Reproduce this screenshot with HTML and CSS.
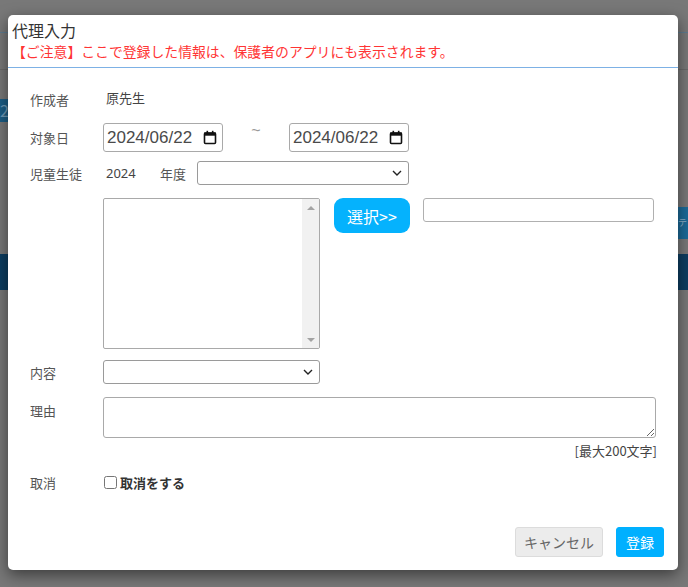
FILE: index.html
```html
<!DOCTYPE html>
<html lang="ja">
<head>
<meta charset="utf-8">
<title>代理入力</title>
<link rel="stylesheet" href="styles.css">
</head>
<body>
<div class="page">
  <div class="bar1"></div>
  <div class="bar2"></div>
  <div class="bg-row-a"><span class="bg-tab-left">2</span></div>
  <div class="bg-row-b"><span class="bg-tab-right">テ</span></div>
  <div class="bg-band"></div>
</div>

<div class="modal">
  <div class="modal-header">
    <div class="modal-title">代理入力</div>
    <div class="modal-notice">【ご注意】ここで登録した情報は、保護者のアプリにも表示されます。</div>
  </div>

  <div class="modal-body">
    <div class="row row-author">
      <div class="label">作成者</div>
      <div class="value author">原先生</div>
    </div>

    <div class="row row-date">
      <div class="label">対象日</div>
      <div class="date-input">
        <span class="date-text">2024/06/22</span>
        <svg class="cal" width="14" height="15" viewBox="0 0 14 15"><rect x="1.5" y="3" width="11" height="10.5" rx="1" fill="none" stroke="#111" stroke-width="1.6"/><rect x="1" y="2.5" width="12" height="3.2" fill="#111"/><rect x="3.5" y="0.8" width="1.6" height="2.5" fill="#111"/><rect x="8.9" y="0.8" width="1.6" height="2.5" fill="#111"/></svg>
      </div>
      <span class="tilde">~</span>
      <div class="date-input">
        <span class="date-text">2024/06/22</span>
        <svg class="cal" width="14" height="15" viewBox="0 0 14 15"><rect x="1.5" y="3" width="11" height="10.5" rx="1" fill="none" stroke="#111" stroke-width="1.6"/><rect x="1" y="2.5" width="12" height="3.2" fill="#111"/><rect x="3.5" y="0.8" width="1.6" height="2.5" fill="#111"/><rect x="8.9" y="0.8" width="1.6" height="2.5" fill="#111"/></svg>
      </div>
    </div>

    <div class="row row-student">
      <div class="label">児童生徒</div>
      <span class="year">2024</span>
      <span class="year-label">年度</span>
      <div class="select select-year">
        <svg class="chev" width="10" height="6" viewBox="0 0 10 6"><polyline points="1,1 5,5 9,1" fill="none" stroke="#222" stroke-width="1.4"/></svg>
      </div>
    </div>

    <div class="row row-list">
      <div class="label"></div>
      <div class="listbox">
        <div class="list-area"></div>
        <div class="scroll-track">
          <span class="arrow-up"></span>
          <span class="arrow-down"></span>
        </div>
      </div>
      <button class="btn-select">選択&gt;&gt;</button>
      <input class="text-input" type="text">
    </div>

    <div class="row row-content">
      <div class="label">内容</div>
      <div class="select select-content">
        <svg class="chev" width="10" height="6" viewBox="0 0 10 6"><polyline points="1,1 5,5 9,1" fill="none" stroke="#222" stroke-width="1.4"/></svg>
      </div>
    </div>

    <div class="row row-reason">
      <div class="label label-top">理由</div>
      <div class="reason-col">
        <textarea class="reason"></textarea>
        <div class="limit">[最大200文字]</div>
      </div>
    </div>

    <div class="row row-cancel">
      <div class="label">取消</div>
      <label class="check"><input type="checkbox"><span>取消をする</span></label>
    </div>
  </div>

  <div class="modal-footer">
    <button class="btn btn-cancel">キャンセル</button>
    <button class="btn btn-submit">登録</button>
  </div>
</div>
</body>
</html>
```

FILE: styles.css
```css
* { box-sizing: border-box; }

html, body {
  margin: 0;
  padding: 0;
  width: 688px;
  height: 587px;
  overflow: hidden;
  font-family: "Noto Sans CJK JP", "Noto Sans", sans-serif;
}

body { position: relative; background: #787878; }

.page {
  display: flex;
  flex-direction: column;
  height: 587px;
  background: #787878;
}
.bar1 { height: 33px; border-bottom: 1px solid #5d7a8e; }
.bar2 { height: 37px; border-bottom: 1px solid #6a6a6a; }
.bg-row-a { margin-top: 29px; height: 23px; }
.bg-tab-left {
  display: block;
  width: 8px;
  height: 23px;
  background: #1c5e86;
  color: #6f9bb8;
  font-size: 16px;
  line-height: 23px;
  overflow: hidden;
}
.bg-row-b {
  margin-top: 85px;
  height: 32px;
  display: flex;
  justify-content: flex-end;
}
.bg-tab-right {
  width: 10px;
  height: 32px;
  background: #1b6a98;
  color: #8fb3cc;
  font-size: 9px;
  line-height: 32px;
  overflow: hidden;
  text-align: left;
}
.bg-band { margin-top: 15px; height: 36px; background: #0d3d61; }

/* modal */
.modal {
  position: absolute;
  left: 8px;
  top: 15px;
  width: 670px;
  height: 555px;
  background: #fff;
  border-radius: 5px;
  box-shadow: 0 5px 15px rgba(0,0,0,0.5);
  display: flex;
  flex-direction: column;
}

.modal-header {
  padding: 4px 4px 6px 4px;
  border-bottom: 1px solid #7db1e5;
}
.modal-title {
  font-size: 16px;
  line-height: 22px;
  color: #333;
}
.modal-notice {
  font-size: 13.85px;
  line-height: 20px;
  color: #ff3434;
}

.modal-body {
  padding: 20px 21px 0 22px;
  flex: 1;
}

.row { display: flex; align-items: center; }

.label {
  width: 73px;
  flex: none;
  font-size: 13px;
  color: #555;
}

.row-author { height: 22px; margin-bottom: 13px; }
.author { font-size: 13px; color: #444; margin-left: 3px; margin-top: -4px; }

.row-date { height: 29px; margin-bottom: 9px; }
.date-input {
  width: 120px;
  height: 29px;
  border: 1px solid #a9a9a9;
  border-radius: 3px;
  display: flex;
  align-items: center;
  justify-content: space-between;
  padding: 0 5px 0 3px;
}
.date-text {
  font-family: "Liberation Sans", Arial, sans-serif;
  font-size: 17px;
  color: #4a4a4a;
}
.cal { display: block; }
.tilde {
  width: 66px;
  text-align: center;
  align-self: flex-start;
  font-family: "Liberation Sans", sans-serif;
  font-size: 16px;
  color: #999;
  line-height: 16px;
  margin-top: 0;
}

.row-student { height: 24px; margin-bottom: 13px; }
.year {
  font-family: "Noto Sans", sans-serif;
  font-size: 13px;
  color: #444;
  margin-left: 3px;
  width: 54px;
}
.year-label { font-size: 13px; color: #555; width: 37px; }

.select {
  height: 24px;
  border: 1px solid #9a9a9a;
  border-radius: 3px;
  background: #fff;
  display: flex;
  align-items: center;
  justify-content: flex-end;
  padding-right: 6px;
}
.select-year { width: 212px; }
.select-content { width: 217px; }
.chev { display: block; }

.row-list { align-items: flex-start; height: 151px; margin-bottom: 11px; }
.listbox {
  width: 217px;
  height: 151px;
  border: 1px solid #a9a9a9;
  border-radius: 2px;
  display: flex;
  overflow: hidden;
}
.list-area { flex: 1; }
.scroll-track {
  width: 17px;
  background: #f1f1f1;
  display: flex;
  flex-direction: column;
  justify-content: space-between;
  align-items: center;
  padding: 7px 0 6px;
}
.arrow-up, .arrow-down {
  width: 0; height: 0;
  border-left: 4px solid transparent;
  border-right: 4px solid transparent;
}
.arrow-up { border-bottom: 4px solid #a3a3a3; }
.arrow-down { border-top: 4px solid #a3a3a3; }

.btn-select {
  margin-left: 14px;
  width: 76px;
  height: 35px;
  border: none;
  border-radius: 9px;
  background: #05b2fd;
  color: #fff;
  font-family: "Noto Sans CJK JP", sans-serif;
  font-size: 16px;
  padding: 0;
}
.text-input {
  margin-left: 13px;
  width: 231px;
  height: 24px;
  border: 1px solid #b0b0b0;
  border-radius: 3px;
  padding: 0;
}

.row-content { height: 24px; margin-bottom: 13px; }

.row-reason { align-items: flex-start; }
.label-top { padding-top: 4px; }
.reason-col { flex: 1; display: flex; flex-direction: column; }
.reason {
  display: block;
  width: 553px;
  height: 41px;
  border: 1px solid #a9a9a9;
  border-radius: 3px;
  margin: 0;
  resize: both;
}
.limit {
  text-align: right;
  font-size: 13px;
  color: #444;
  line-height: 18px;
  margin-top: 4px;
}

.row-cancel { height: 20px; margin-top: 12px; }
.check { display: flex; align-items: center; }
.check input { margin: 0 3px 0 1px; width: 13px; height: 13px; }
.check span { font-size: 13px; font-weight: bold; color: #333; }

.modal-footer {
  display: flex;
  justify-content: flex-end;
  gap: 13px;
  padding: 0 14px 13px 0;
}
.btn {
  height: 30px;
  border-radius: 3px;
  font-family: "Noto Sans CJK JP", sans-serif;
  font-size: 14px;
  padding: 0;
}
.btn-cancel {
  width: 88px;
  background: #ececec;
  border: 1px solid #dcdcdc;
  color: #666;
}
.btn-submit {
  width: 48px;
  background: #00b0ff;
  border: 1px solid #00b0ff;
  color: #fff;
}
```
